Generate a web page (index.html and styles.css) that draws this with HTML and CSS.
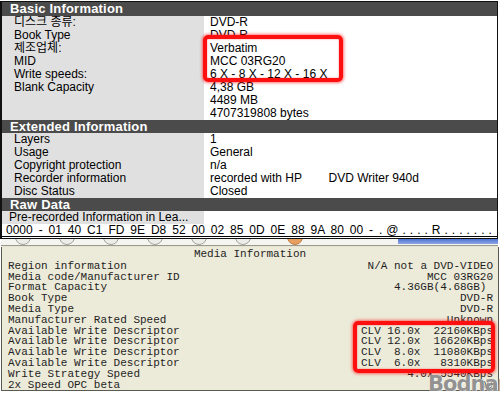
FILE: index.html
```html
<!DOCTYPE html>
<html>
<head>
<meta charset="utf-8">
<title>DVD Media Info</title>
<link rel="stylesheet" href="styles.css">
</head>
<body>
<div class="info">
	<div class="sec first">Basic Information</div>
	<div class="row"><span class="k">디스크 종류:</span><span class="v">DVD-R</span></div>
	<div class="row"><span class="k">Book Type</span><span class="v">DVD-R</span></div>
	<div class="row"><span class="k">제조업체:</span><span class="v">Verbatim</span></div>
	<div class="row"><span class="k">MID</span><span class="v">MCC 03RG20</span></div>
	<div class="row"><span class="k">Write speeds:</span><span class="v">6 X - 8 X - 12 X - 16 X</span></div>
	<div class="row"><span class="k">Blank Capacity</span><span class="v">4,38 GB
4489 MB
4707319808 bytes</span></div>

	<div class="sec">Extended Information</div>
	<div class="row"><span class="k">Layers</span><span class="v">1</span></div>
	<div class="row"><span class="k">Usage</span><span class="v">General</span></div>
	<div class="row"><span class="k">Copyright protection</span><span class="v">n/a</span></div>
	<div class="row"><span class="k">Recorder information</span><span class="v">recorded with HP        DVD Writer 940d</span></div>
	<div class="row"><span class="k">Disc Status</span><span class="v">Closed</span></div>

	<div class="sec">Raw Data</div>
	<div class="row"><span class="k raw">Pre-recorded Information in Lea...</span><span class="v"></span></div>
	<div class="hex">0000 - 01 40 C1 FD 9E D8 52 00 02 85 0D 0E 88 9A 80 00 - <span class="asc">.@....R.......</span></div>
</div>

<div class="strip">
	<span class="dot"></span><span class="dot"></span><span class="dot"></span><span class="dot"></span>
	<span class="dot"></span><span class="dot"></span><span class="dot orange"></span>
</div>

<div class="media">
	<div class="mtitle">Media Information</div>
	<div class="m"><span>Region information</span><span>N/A not a DVD-VIDEO</span></div>
	<div class="m"><span>Media code/Manufacturer ID</span><span>MCC 03RG20</span></div>
	<div class="m"><span>Format Capacity</span><span>4.36GB(4.68GB) </span></div>
	<div class="m"><span>Book Type</span><span>DVD-R</span></div>
	<div class="m"><span>Media Type</span><span>DVD-R</span></div>
	<div class="m"><span>Manufacturer Rated Speed</span><span>Unknown</span></div>
	<div class="m"><span>Available Write Descriptor</span><span>CLV 16.0x  22160KBps</span></div>
	<div class="m"><span>Available Write Descriptor</span><span>CLV 12.0x  16620KBps</span></div>
	<div class="m"><span>Available Write Descriptor</span><span>CLV  8.0x  11080KBps</span></div>
	<div class="m"><span>Available Write Descriptor</span><span>CLV  6.0x   8310KBps</span></div>
	<div class="m"><span>Write Strategy Speed</span><span>4.0x 5540KBps</span></div>
	<div class="m"><span>2x Speed OPC beta</span><span>09</span></div>
</div>

<!-- red marks drawn over the screenshot -->
<div class="mark mark-a"></div>
<div class="mark mark-b"></div>
<div class="wm">Bodnara</div>
</body>
</html>
```

FILE: styles.css
```css
body{margin:0;background:#fff;width:500px;height:393px;overflow:hidden;position:relative}
.info{margin:1px 2px 0 0;border:1px solid #111;border-left-width:2px;padding-bottom:1px;font:12px/13px "Liberation Sans","Noto Sans CJK KR",sans-serif;color:#000}
.sec{background:#4b4b4b;color:#fff;font-weight:bold;font-size:13px;line-height:13px;padding-left:8px;letter-spacing:0.2px}
.sec.first{line-height:14px}
.row{display:grid;grid-template-columns:202px 1fr}
.k{background:#e0e0e0;padding-left:12px;white-space:nowrap}
.k.raw{padding-left:7px}
.v{padding-left:6px;white-space:pre}
.hex{line-height:12px;border-bottom:1px solid #000;padding-left:4px;word-spacing:2.6px;white-space:nowrap;overflow:hidden}
.hex .asc{letter-spacing:4px}

.strip{height:8px;margin:0 2px 0 1px;display:flex;gap:28px;padding-left:14px;overflow:hidden;background:linear-gradient(#f4f4f0,#f4f4f0 6px,#9a9a8e 6px,#9a9a8e 7px,#e6e3d2 7px);position:relative}
.strip::after{content:"";position:absolute;right:0;top:0;width:100px;height:5px;background:linear-gradient(#4e74d2,#8ea6e4)}
.dot{flex:0 0 14px;height:14px;margin-top:-10px;border-radius:50%;border:1px solid #a4a49e;background:#ecece8}
.dot.orange{background:#e8a060;border-color:#c08048;margin-left:8px}

.media{height:144px;margin:0 1px 1px 1px;border:1px solid #5a5a55;border-top:none;background:#ecead9;font:11px/10.8px "Liberation Mono","Courier New",monospace;color:#1e1e1e;padding-top:2px;overflow:hidden;box-sizing:border-box}
.mtitle{text-align:center;margin-bottom:1px}
.m{display:flex;justify-content:space-between;padding:0 5px 0 6px;white-space:pre}

.mark{position:absolute;border:4px solid #ff1010;border-radius:5px;box-shadow:0 0 3px 1px rgba(255,0,0,.55),inset 0 0 2px rgba(255,0,0,.5)}
.mark-a{left:203px;top:35px;width:132px;height:39px}
.mark-b{left:353px;top:321px;width:134px;height:44px}
.wm{position:absolute;left:428px;top:374px;font:bold 21px/20px "DejaVu Sans",sans-serif;color:rgba(110,110,110,.75);letter-spacing:-1px;text-shadow:0 0 1px #fff,1px 1px 0 rgba(255,255,255,.6)}
```
